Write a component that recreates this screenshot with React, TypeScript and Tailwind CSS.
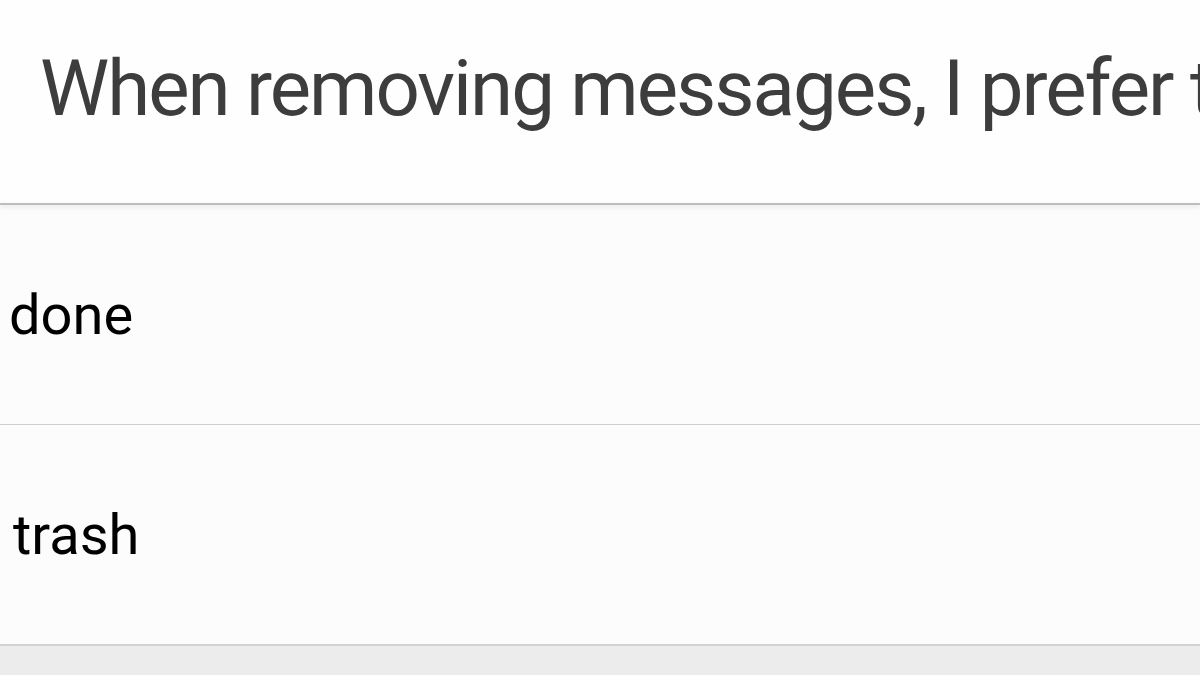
export default function App() {
  const options = [
    { label: "done", pad: "pl-[9px]" },
    { label: "trash", pad: "pl-[13px]" },
  ];

  return (
    <div className="w-[1200px] h-[675px] overflow-hidden bg-[#ececec] flex flex-col font-['Roboto','Liberation_Sans',Arial,sans-serif]">
      <div className="h-[203px] shrink-0 bg-[#fefefe] pl-[40px] pt-[50px] whitespace-nowrap overflow-hidden">
        <h1 className="text-[78px] leading-none tracking-[-2px] text-[#3d3d3d]">When removing messages, I prefer to</h1>
      </div>
      <div className="h-[2px] shrink-0 bg-[#bdbdbd] shadow-[0_2px_4px_rgba(0,0,0,0.12)] relative z-10" />
      <div className="flex flex-col bg-[#fcfcfc]">
        {options.map((o, i) => (
          <div key={o.label} className={i > 0 ? "border-t border-[#cfcfcf]" : ""}>
            <div className={"h-[219px] flex items-center " + o.pad}>
              <span className="text-[56px] leading-none text-black">{o.label}</span>
            </div>
          </div>
        ))}
      </div>
      <div className="h-[2px] shrink-0 bg-[#d2d2d2]" />
    </div>
  );
}
